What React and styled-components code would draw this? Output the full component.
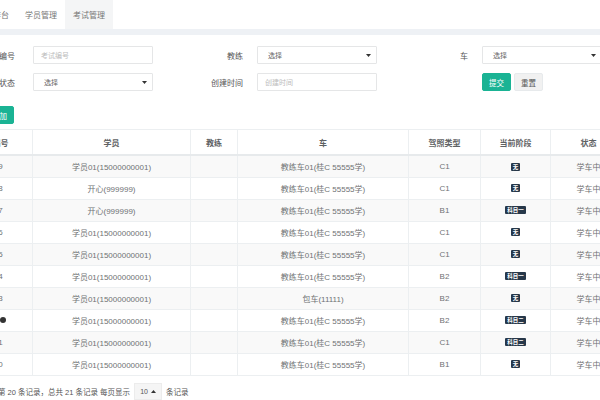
import React from "react";
import styled, { createGlobalStyle } from "styled-components";

const GlobalStyle = createGlobalStyle`
  html, body {
    margin: 0;
    padding: 0;
    background: #ffffff;
    overflow: hidden;
  }
  body {
    font-family: "Liberation Sans", "Noto Sans CJK SC", sans-serif;
    font-size: 8px;
    color: #676a6c;
  }
`;

//table rows shown on the current page
const rows = [
  { id: "9", student: "学员01(15000000001)", car: "教练车01(桂C 55555学)", license: "C1", stage: "无" },
  { id: "8", student: "开心(999999)", car: "教练车01(桂C 55555学)", license: "C1", stage: "无" },
  { id: "7", student: "开心(999999)", car: "教练车01(桂C 55555学)", license: "B1", stage: "科目一" },
  { id: "6", student: "学员01(15000000001)", car: "教练车01(桂C 55555学)", license: "C1", stage: "无" },
  { id: "5", student: "学员01(15000000001)", car: "教练车01(桂C 55555学)", license: "C1", stage: "无" },
  { id: "4", student: "学员01(15000000001)", car: "教练车01(桂C 55555学)", license: "B2", stage: "科目一" },
  { id: "3", student: "学员01(15000000001)", car: "包车(11111)", license: "B2", stage: "无" },
  { id: "2", student: "学员01(15000000001)", car: "教练车01(桂C 55555学)", license: "B2", stage: "科目二", flag: true },
  { id: "1", student: "学员01(15000000001)", car: "教练车01(桂C 55555学)", license: "C1", stage: "科目二" },
  { id: "0", student: "学员01(15000000001)", car: "教练车01(桂C 55555学)", license: "B1", stage: "无" },
];

const columns = [
  { title: "编号", width: 64 },
  { title: "学员", width: 158 },
  { title: "教练", width: 47 },
  { title: "车", width: 171 },
  { title: "驾照类型", width: 72 },
  { title: "当前阶段", width: 70 },
  { title: "状态", width: 76 },
  { title: "操作", width: 90 },
];

const tabs = [
  { name: "工作台" },
  { name: "学员管理" },
  { name: "考试管理", active: true },
];

const Caret = () => (
  <svg width="5" height="3" viewBox="0 0 5 3">
    <path d="M0 0 L5 0 L2.5 3 Z" fill="#333" />
  </svg>
);

const App = () => {
  return (
    <>
      <GlobalStyle />
      <Page>
        <TopNav>
          {tabs.map((tab) => (
            <NavTab key={tab.name} active={tab.active}>
              {tab.name}
            </NavTab>
          ))}
        </TopNav>
        <NavShadow />
        <Content>
          <SearchForm>
            <FieldLabel first>考试编号</FieldLabel>
            <TextInput placeholder="考试编号" />
            <FieldLabel>教练</FieldLabel>
            <SelectBox>
              选择
              <Caret />
            </SelectBox>
            <FieldLabel>车</FieldLabel>
            <SelectBox>
              选择
              <Caret />
            </SelectBox>

            <FieldLabel first>考试状态</FieldLabel>
            <SelectBox>
              选择
              <Caret />
            </SelectBox>
            <FieldLabel>创建时间</FieldLabel>
            <TextInput placeholder="创建时间" />
            <div />
            <ButtonGroup>
              <Button primary>提交</Button>
              <Button>重置</Button>
            </ButtonGroup>
          </SearchForm>

          <Toolbar>
            <Button primary>添加</Button>
          </Toolbar>

          <Table>
            <colgroup>
              {columns.map((col) => (
                <col key={col.title} style={{ width: col.width }} />
              ))}
            </colgroup>
            <thead>
              <tr>
                {columns.map((col) => (
                  <HeadCell key={col.title}>{col.title}</HeadCell>
                ))}
              </tr>
            </thead>
            <tbody>
              {rows.map((row, i) => (
                <BodyRow key={i} striped={i % 2 === 0}>
                  <Cell>
                    {row.id}
                    {row.flag && <Dot />}
                  </Cell>
                  <Cell>{row.student}</Cell>
                  <Cell></Cell>
                  <Cell>{row.car}</Cell>
                  <Cell>{row.license}</Cell>
                  <Cell>
                    <StageBadge>{row.stage}</StageBadge>
                  </Cell>
                  <Cell>学车中</Cell>
                  <Cell></Cell>
                </BodyRow>
              ))}
            </tbody>
          </Table>

          <Pager>
            <span>第 11 到第 20 条记录，总共 21 条记录 每页显示</span>
            <PageSize>
              10
              <svg width="5" height="3" viewBox="0 0 5 3">
                <path d="M0 3 L5 3 L2.5 0 Z" fill="#333" />
              </svg>
            </PageSize>
            <span>条记录</span>
          </Pager>
        </Content>
      </Page>
    </>
  );
};

export default App;

const Page = styled.div`
  margin-left: -32px;
  width: 760px;
`;

const TopNav = styled.div`
  height: 29px;
  display: flex;
  align-items: stretch;
  padding-left: 9px;
  background: #ffffff;
`;

const NavTab = styled.div`
  display: flex;
  align-items: center;
  padding: 0 8px;
  color: #777;
  background: ${({ active }) => (active ? "#f4f5f6" : "transparent")};
`;

const NavShadow = styled.div`
  height: 6px;
  background: #eef1f5;
`;

const Content = styled.div`
  padding-top: 11px;
`;

const SearchForm = styled.div`
  display: grid;
  grid-template-columns: 65px 120px 104px 120px 105px 120px;
  grid-auto-rows: 18px;
  row-gap: 9px;
  align-items: center;
`;

const FieldLabel = styled.div`
  text-align: right;
  padding-right: ${({ first }) => (first ? "18px" : "14px")};
  color: #555;
`;

const TextInput = styled.input`
  box-sizing: border-box;
  height: 18px;
  width: 100%;
  border: 1px solid #e5e6e7;
  border-radius: 1px;
  padding: 0 7px;
  font-family: inherit;
  font-size: 7px;
  outline: none;
  &::placeholder {
    color: #bcbcbc;
  }
`;

const SelectBox = styled.div`
  box-sizing: border-box;
  height: 18px;
  border: 1px solid #e5e6e7;
  border-radius: 1px;
  padding: 0 5px 0 10px;
  display: flex;
  align-items: center;
  justify-content: space-between;
  color: #666;
  font-size: 7px;
`;

const ButtonGroup = styled.div`
  display: flex;
  gap: 3px;
  height: 18px;
`;

const Button = styled.button`
  box-sizing: border-box;
  height: 18px;
  padding: 0 6px;
  border-radius: 2px;
  font-family: inherit;
  font-size: 7.5px;
  border: 1px solid ${({ primary }) => (primary ? "#1ab394" : "#e7eaec")};
  background: ${({ primary }) => (primary ? "#1ab394" : "#f1f1f1")};
  color: ${({ primary }) => (primary ? "#ffffff" : "#555")};
`;

const Toolbar = styled.div`
  display: flex;
  padding-left: 17px;
  margin-top: 15px;
`;

const Table = styled.table`
  margin-top: 5px;
  table-layout: fixed;
  border-collapse: collapse;
  width: 748px;
`;

const HeadCell = styled.th`
  height: 24px;
  padding: 0;
  text-align: center;
  font-weight: bold;
  color: #5e6163;
  border-top: 1px solid #eceff1;
  border-left: 1px solid #eceff1;
  border-bottom: 2px solid #e7eaec;
`;

const BodyRow = styled.tr`
  height: 22px;
  background: ${({ striped }) => (striped ? "#f9f9f9" : "#ffffff")};
`;

const Cell = styled.td`
  padding: 0;
  text-align: center;
  color: #6f7274;
  border-left: 1px solid #eceff1;
  border-bottom: 1px solid #eceff1;
  white-space: nowrap;
  overflow: hidden;
`;

const Dot = styled.span`
  display: inline-block;
  width: 6px;
  height: 6px;
  margin-left: 1px;
  border-radius: 50%;
  background: #333;
  vertical-align: middle;
`;

const StageBadge = styled.span`
  display: inline-block;
  padding: 0 2px;
  line-height: 8px;
  height: 8px;
  font-size: 5.5px;
  font-weight: bold;
  color: #ffffff;
  background: #27384a;
  border-radius: 1px;
  vertical-align: middle;
`;

const Pager = styled.div`
  display: flex;
  align-items: center;
  gap: 4px;
  margin-top: 7px;
  padding-left: 3px;
  color: #555;
  height: 17px;
  font-size: 7.5px;
`;

const PageSize = styled.div`
  box-sizing: border-box;
  height: 17px;
  width: 28px;
  display: flex;
  align-items: center;
  justify-content: center;
  gap: 3px;
  background: #f5f5f5;
  border: 1px solid #ececec;
  color: #555;
  font-size: 7px;
`;
